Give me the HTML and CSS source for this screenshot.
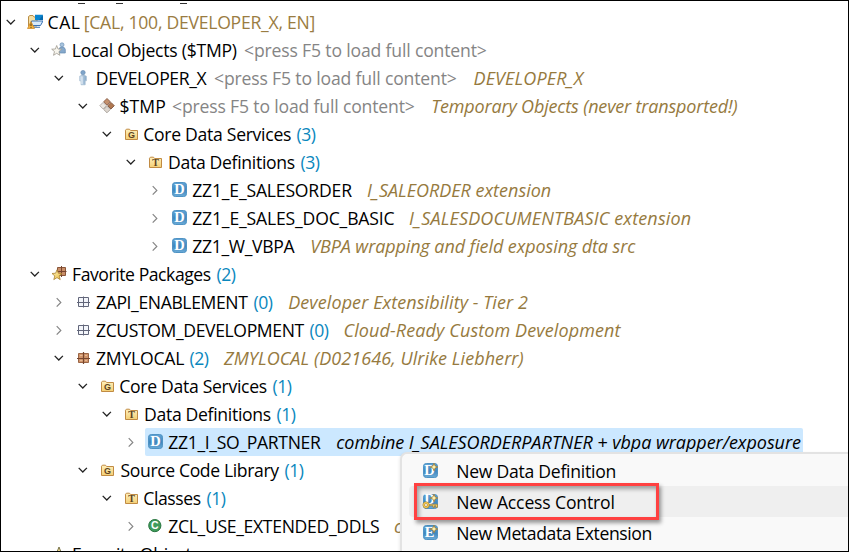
FILE: index.html
```html
<!DOCTYPE html>
<html lang="en">
<head>
<meta charset="utf-8">
<title>Project Explorer</title>
<link rel="stylesheet" href="styles.css">
</head>
<body>
<svg class="defs" width="0" height="0" aria-hidden="true">
  <defs>
    <linearGradient id="blue" x1="0" y1="0" x2="0" y2="1"><stop offset="0" stop-color="#62a5d6"/><stop offset=".55" stop-color="#3f86bd"/><stop offset="1" stop-color="#6cacd8"/></linearGradient>
    <linearGradient id="gold" x1="0" y1="0" x2="0" y2="1"><stop offset="0" stop-color="#fff0bd"/><stop offset="1" stop-color="#f3cf75"/></linearGradient>
    <linearGradient id="star" x1="0" y1="0" x2="1" y2="1"><stop offset="0" stop-color="#fff6c0"/><stop offset="1" stop-color="#e8b83c"/></linearGradient>
    <linearGradient id="person" x1="0" y1="0" x2="1" y2="0"><stop offset="0" stop-color="#d3e1ee"/><stop offset="1" stop-color="#86a9c9"/></linearGradient>
  </defs>
  <symbol id="open" viewBox="0 0 16 16"><path d="M3.7 5.9 7.8 10 11.9 5.9" fill="none" stroke="#222" stroke-width="1.3"/></symbol>
  <symbol id="closed" viewBox="0 0 16 16"><path d="M5.7 4.2 9.8 8.4 5.7 12.6" fill="none" stroke="#858585" stroke-width="1.2"/></symbol>
  <symbol id="system" viewBox="0 0 16 16">
    <path d="M1.5 12V2.5L3 1.5H6L7 3H10V12Z" fill="#f5dfa5" stroke="#b98d45"/>
    <path d="M8 .8H16L14.5 6H8Z" fill="#0a85cf"/><path d="M12 6 16 1V6Z" fill="#0568ac"/>
    <path d="M4.5 7H16L13.5 11.5H4Z" fill="#d8eafa" stroke="#3972b5"/>
    <path d="M7 13.3H13" stroke="#5785bc" stroke-width="1.2"/>
    <path d="M4 7.5 7.5 14.5H.5Z" fill="#f2b33e" stroke="#cb8422" stroke-width=".7"/><path d="M4 9.5V12M4 12.9V13.9" stroke="#52350f"/>
  </symbol>
  <symbol id="local" viewBox="0 0 16 16">
    <circle cx="11" cy="2.8" r="2" fill="#a9c4dd" stroke="#6f94b9" stroke-width=".7"/>
    <path d="M8 7.5Q8 5 11 5T14.3 7.5V11H8Z" fill="#86a9cc" stroke="#6389b0" stroke-width=".7"/>
    <path d="M5.7 3.5 7 7 10.7 7.2 7.9 9.6 8.9 13.3 5.7 11.3 2.5 13.3 3.5 9.6 .7 7.2 4.4 7Z" fill="#f8f6ee" stroke="#a09b91" stroke-width=".8"/>
  </symbol>
  <symbol id="user" viewBox="0 0 16 16">
    <path d="M4.6 6.2Q8 3.8 11.4 6.2V10.8H10.2V14.8H6V10.8H4.6Z" fill="url(#person)" stroke="#9fb8cf" stroke-width=".6"/>
    <circle cx="8" cy="2.6" r="2.2" fill="#7fa4c9" stroke="#6288b0" stroke-width=".6"/>
    <path d="M7 6.5V14" stroke="#edf4fa"/>
  </symbol>
  <symbol id="tmp" viewBox="0 0 16 16">
    <g stroke-width=".8"><path d="M8 .5 11.4 3.8 8 7.1 4.6 3.8Z" fill="#c3906c" stroke="#80513a"/><path d="M12 4.4 15.3 7.7 12 11 8.7 7.7Z" fill="#b07850" stroke="#754932"/><path d="M4.1 4.4 7.4 7.7 4.1 11 .8 7.7Z" fill="#ece7e1" stroke="#aaa29a"/><path d="M8 8.2 11.3 11.5 8 14.8 4.7 11.5Z" fill="#ddd6cf" stroke="#9d958d"/></g>
  </symbol>
  <symbol id="folder" viewBox="0 0 16 16">
    <path d="M2.5 13.5V4.2L3.4 3.2H6.5L7.6 4.5H14.5V13.5Z" fill="url(#gold)" stroke="#c18b43"/>
  </symbol>
  <symbol id="tile" viewBox="0 0 16 16"><rect x="1.5" y=".5" width="14" height="14" rx="2.8" fill="url(#blue)" stroke="#4f93c4"/></symbol>
  <symbol id="class" viewBox="0 0 16 16"><circle cx="7.8" cy="7.6" r="6.1" fill="#3f9b5b" stroke="#28753f"/></symbol>
  <symbol id="grid" viewBox="0 0 16 16"><path d="M3.5 3.5H13.5V12.5H3.5ZM8.5 2.5V13.5M2 8.5H15" fill="#f3f5fa" stroke="#62667a"/></symbol>
  <symbol id="pkg" viewBox="0 0 16 16"><path d="M3.5 3.5H13.5V12.5H3.5Z" fill="#d0946a" stroke="#9a6545"/><path d="M8.5 2V14M2 8.5H15" stroke="#76452e" stroke-width="1.2"/><path d="M5 5.5H7.5M10 5.5H12M5 10.5H7.5M10 10.5H12" stroke="#e8b994"/></symbol>
  <symbol id="favpkg" viewBox="0 0 16 16">
    <path d="M6.5 1.5H14.5V9.5H6.5Z" fill="#c98e68" stroke="#8a563a"/><path d="M10.5 0V11M6 5.5H15.5" stroke="#76452e"/>
    <path d="M6 3.8 7.4 7.2 11 7.5 8.2 9.9 9.2 13.6 6 11.6 2.8 13.6 3.8 9.9 1 7.5 4.6 7.2Z" fill="url(#star)" stroke="#a8802f" stroke-width=".8"/>
  </symbol>
  <symbol id="favobj" viewBox="0 0 16 16"><path d="M8 1 10 6 15 6.4 11 9.5V15H4V9.5L1 6.4 6 6Z" fill="url(#star)" stroke="#77734a"/></symbol>
  <symbol id="plus" viewBox="0 0 16 16"><path d="M12 .2 13.1 2.9 15.8 4 13.1 5.1 12 7.8 10.9 5.1 8.2 4 10.9 2.9Z" fill="#fff3ad" stroke="#9c7b39" stroke-width=".8"/></symbol>
  <symbol id="key" viewBox="0 0 16 16"><path d="M6.5 10.2H15.5V13.4H13.8V11.7H12.5V13.4H11V11.7H6.5Z" fill="#f6cf65" stroke="#93702c" stroke-width=".6"/><circle cx="4" cy="11" r="2.2" fill="#fff" stroke="#93702c" stroke-width="2.4"/><circle cx="4" cy="11" r="2.2" fill="none" stroke="#f2c955" stroke-width="1.4"/></symbol>
</svg>
<main class="window">
  <div class="cut"><i></i><i></i><i></i></div>
  <div id="tree" class="tree"></div>
  <div class="menu">
    <div class="item"><svg class="icon" viewBox="0 0 16 16"><use href="#tile"/><text x="7.6" y="12.3" class="letter">D</text><use href="#plus"/></svg><span class="fit" data-ink="457.7,615">New Data Definition</span></div>
    <div class="item hover"><svg class="icon" viewBox="0 0 16 16"><use href="#tile"/><text x="7.6" y="10.3" class="letter">D</text><use href="#plus"/><use href="#key"/></svg><span class="fit" data-ink="457.7,613">New Access Control</span></div>
    <div class="item"><svg class="icon" viewBox="0 0 16 16"><use href="#tile"/><text x="7.6" y="12.3" class="letter">E</text><use href="#plus"/></svg><span class="fit" data-ink="457.7,651">New Metadata Extension</span></div>
  </div>
  <div class="marker"></div>
</main>
<script src="tree.js"></script>
</body>
</html>
```
FILE: styles.css
```css
* { box-sizing: border-box; }
body { margin: 0; background: #fff; color: #000; font: 17.6px/28px "Open Sans", "Noto Sans", sans-serif; }
.defs { position: absolute; }
.window { position: relative; width: 849px; height: 552px; border: 1px solid #000; overflow: hidden; }
.cut { display: flex; height: 7px; padding: 2px 0 0 77px; }
.cut i { width: 7px; height: 1px; background: #333; margin-right: 31px; }
.cut i:nth-child(2) { margin-right: 57px; }
.tree { display: flex; flex-direction: column; }
.row { display: flex; align-items: center; height: 28px; padding-left: 2px; flex: none; }
.arrow, .icon { display: block; width: 16px; height: 16px; flex: none; }
.arrow { margin-right: 8px; }
.indent { width: 24px; flex: none; }
.content { display: flex; align-items: center; height: 28px; }
.content .icon { margin-right: 5px; }
.selected .content { background: #cce8ff; border-radius: 2px; padding-left: 2px; margin-left: -2px; width: 658px; }
.fit { display: block; flex: none; white-space: pre; height: 28px; }
.system { color: #9a7c42; }
.muted { color: #858585; }
.hint { color: #967a3e; font-style: italic; font-size: 18px; }
.selected .hint { color: #000; }
.count { color: #0a87bd; }
.glyph { font: bold 10px "Liberation Serif", serif; fill: #5d4323; text-anchor: middle; }
.glyph.sans { font: bold 9px "Liberation Sans", sans-serif; }
.letter { font: bold 14.5px "Liberation Serif", serif; fill: #fff; text-anchor: middle; }
.letter.c { font: bold 10.5px "Liberation Sans", sans-serif; }
.menu { position: absolute; left: 399px; top: 451px; width: 460px; height: 110px; background: #f9f9f9; border: 2px solid #e3e3e3; border-right: 0; border-radius: 7px 0 0 0; padding-top: 1px; box-shadow: -1px 1px 3px rgba(0,0,0,.07); }
.item { display: flex; align-items: center; height: 31px; margin-left: 7px; padding-left: 13px; border-radius: 4px 0 0 4px; }
.item .icon { margin-right: 19px; }
.hover { background: #efefef; }
.marker { position: absolute; left: 413px; top: 482px; width: 245px; height: 37px; border: 3px solid #ff4141; box-shadow: 2px 3px 4px rgba(0,0,0,.4), inset 2px 3px 4px rgba(0,0,0,.35); }
```
FILE: tree.js
```js
// Each part: text, style class, left and right ink edge in the window.
const rows = [
  [0, 'open', 'system', [['CAL', 'name', 49, 79.3], ['[CAL, 100, DEVELOPER_X, EN]', 'system', 85.3, 314]]],
  [1, 'open', 'local', [['Local Objects ($TMP)', 'name', 73.3, 236.3], ['<press F5 to load full content>', 'muted', 244.5, 486.3]]],
  [2, 'open', 'user', [['DEVELOPER_X', 'name', 97.3, 207], ['<press F5 to load full content>', 'muted', 214.5, 456.3], ['DEVELOPER_X', 'hint', 474, 584.3]]],
  [3, 'open', 'tmp', [['$TMP', 'name', 121, 164.7], ['<press F5 to load full content>', 'muted', 172.5, 414.3], ['Temporary Objects (never transported!)', 'hint', 432.7, 737]]],
  [4, 'open', 'folderG', [['Core Data Services', 'name', 144.7, 290.5], ['(3)', 'count', 297, 315.3]]],
  [5, 'open', 'folderT', [['Data Definitions', 'name', 169.5, 294.3], ['(3)', 'count', 301, 319.3]]],
  [6, 'closed', 'ddl', [['ZZ1_E_SALESORDER', 'name', 192.7, 351.7], ['I_SALEORDER extension', 'hint', 367.5, 550.3]]],
  [6, 'closed', 'ddl', [['ZZ1_E_SALES_DOC_BASIC', 'name', 192.7, 394], ['I_SALESDOCUMENTBASIC extension', 'hint', 409.5, 690.3]]],
  [6, 'closed', 'ddl', [['ZZ1_W_VBPA', 'name', 192.7, 295], ['VBPA wrapping and field exposing dta src', 'hint', 311.7, 635.7]]],
  [1, 'open', 'favpkg', [['Favorite Packages', 'name', 73.5, 210.3], ['(2)', 'count', 217, 235.3]]],
  [2, 'closed', 'grid', [['ZAPI_ENABLEMENT', 'name', 96.5, 247.7], ['(0)', 'count', 254, 272.3], ['Developer Extensibility - Tier 2', 'hint', 288.7, 527.5]]],
  [2, 'closed', 'grid', [['ZCUSTOM_DEVELOPMENT', 'name', 96.5, 304], ['(0)', 'count', 310, 328.3], ['Cloud-Ready Custom Development', 'hint', 345, 621]]],
  [2, 'open', 'pkg', [['ZMYLOCAL', 'name', 96.5, 183.7], ['(2)', 'count', 190, 208.3], ['ZMYLOCAL (D021646, Ulrike Liebherr)', 'hint', 223.5, 523]]],
  [3, 'open', 'folderG', [['Core Data Services', 'name', 120.7, 266.3], ['(1)', 'count', 273, 291.3]]],
  [4, 'open', 'folderT', [['Data Definitions', 'name', 145.5, 270.3], ['(1)', 'count', 277, 295.3]]],
  [5, 'closed', 'ddl', [['ZZ1_I_SO_PARTNER', 'name', 168.7, 320.5], ['combine I_SALESORDERPARTNER + vbpa wrapper/exposure', 'hint', 336.7, 800.5]], true],
  [3, 'open', 'folderG', [['Source Code Library', 'name', 121, 278.7], ['(1)', 'count', 285, 303.3]]],
  [4, 'open', 'folderT', [['Classes', 'name', 144.7, 200.3], ['(1)', 'count', 207, 225.3]]],
  [5, 'closed', 'class', [['ZCL_USE_EXTENDED_DDLS', 'name', 168.7, 378.5], ['c', 'hint', 394.5, 403]]],
  [1, 'open', 'favobj', [['Favorite Objects', 'name', 73.5, 199]]]
];

// Icons that carry a letter: base symbol and glyph.
const lettered = {
  folderG: ['folder', '<text x="8.5" y="12.3" class="glyph sans">G</text>'],
  folderT: ['folder', '<text x="8.5" y="12.3" class="glyph">T</text>'],
  ddl: ['tile', '<text x="8.5" y="12.3" class="letter">D</text>'],
  class: ['class', '<text x="7.8" y="11.4" class="letter c">C</text>']
};

const svg = (cls, id) => {
  const [base, glyph] = lettered[id] || [id, ''];
  return `<svg class="${cls}" viewBox="0 0 16 16"><use href="#${base}"/>${glyph}</svg>`;
};
const escape = text => text.replace(/</g, '&lt;').replace(/>/g, '&gt;');

document.getElementById('tree').innerHTML = rows.map(([depth, state, icon, parts, selected]) => `
  <div class="row${selected ? ' selected' : ''}">${'<i class="indent"></i>'.repeat(depth)}${svg('arrow', state)}<div class="content">${svg('icon', icon)}${parts.map(([text, cls, from, to]) => `<span class="fit ${cls}" data-ink="${from},${to}">${escape(text)}</span>`).join('')}</div></div>`).join('');

// Track every label so that its ink spans the given edges.
const ctx = document.createElement('canvas').getContext('2d');
document.querySelectorAll('.fit').forEach(el => {
  const [from, to] = el.dataset.ink.split(',').map(Number);
  const style = getComputedStyle(el);
  ctx.font = `${style.fontStyle} ${style.fontWeight} ${style.fontSize} ${style.fontFamily}`;
  const m = ctx.measureText(el.textContent);
  const ink = m.actualBoundingBoxRight + m.actualBoundingBoxLeft;
  const n = el.textContent.length;
  if (n > 1) el.style.letterSpacing = `${(to + 1 - from - ink) / (n - 1)}px`;
  el.style.marginLeft = `${from - 0.5 + m.actualBoundingBoxLeft - el.getBoundingClientRect().left}px`;
});
```
